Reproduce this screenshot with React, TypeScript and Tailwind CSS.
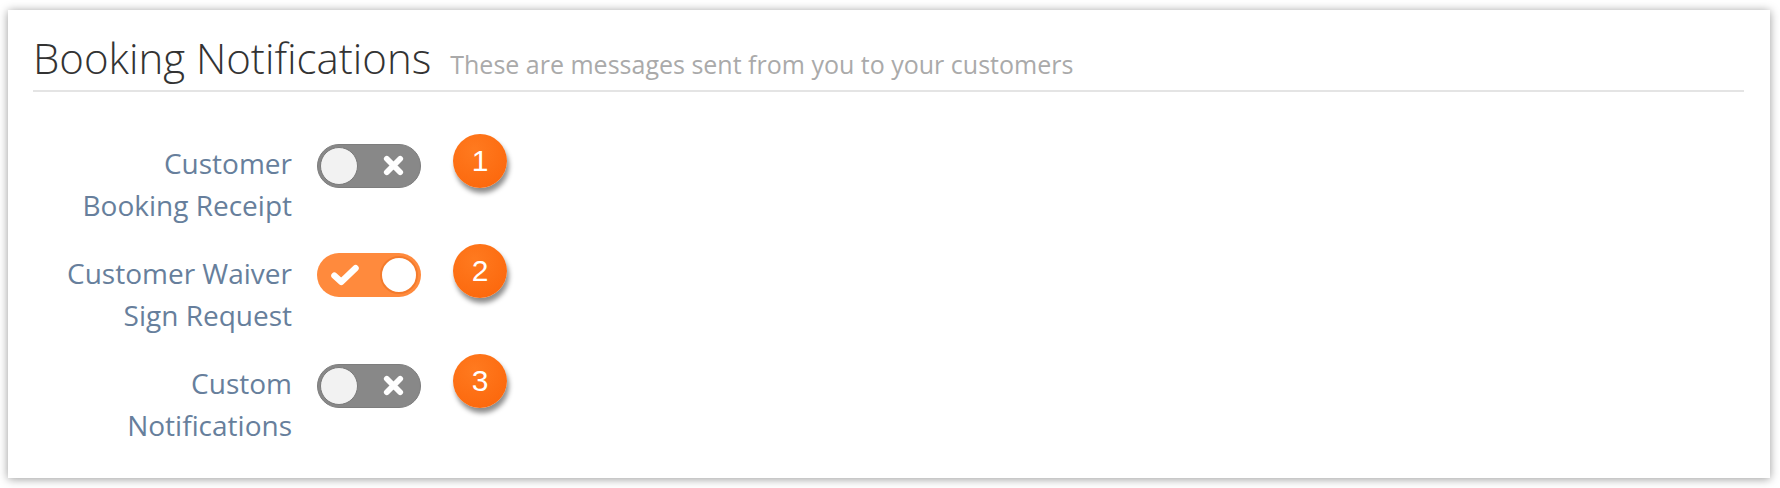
import React from 'react';

type Row = { label: string[]; on: boolean; n: number };

const rows: Row[] = [
  { label: ['Customer', 'Booking Receipt'], on: false, n: 1 },
  { label: ['Customer Waiver', 'Sign Request'], on: true, n: 2 },
  { label: ['Custom', 'Notifications'], on: false, n: 3 },
];

const Toggle: React.FC<{ on: boolean }> = ({ on }) => {
  if (on) {
    return (
      <div className="relative mt-[1px] flex h-[44px] w-[104px] shrink-0 items-center rounded-full bg-[#ff8a3d]">
        <svg viewBox="0 0 24 24" className="ml-[13px] h-[30px] w-[30px]">
          <path d="M3.5 12.5 L9 17.5 L20.5 6.5" fill="none" stroke="white" strokeWidth="5" strokeLinecap="round" strokeLinejoin="round" />
        </svg>
        <span className="absolute right-[3px] top-[3px] h-[38px] w-[38px] rounded-full border-2 border-[#f47b2c] bg-white" />
      </div>
    );
  }
  return (
    <div className="relative mt-[2px] flex h-[44px] w-[104px] shrink-0 items-center rounded-full border border-[#7d7d7d] bg-[#888888]">
      <span className="absolute left-[2px] top-[2px] h-[38px] w-[38px] rounded-full border border-[#7a7a7a] bg-[#f2f2f2]" />
      <svg viewBox="0 0 24 24" className="ml-[64px] h-[23px] w-[23px]">
        <path d="M5 5 L19 19 M19 5 L5 19" fill="none" stroke="white" strokeWidth="6" strokeLinecap="round" />
      </svg>
    </div>
  );
};

const Badge: React.FC<{ n: number }> = ({ n }) => (
  <div className="-mt-[8px] ml-[32px] flex h-[54px] w-[54px] shrink-0 items-center justify-center rounded-full bg-[radial-gradient(circle_at_40%_30%,#ff7a1f,#fb6409)] shadow-[2px_5px_5px_rgba(0,0,0,0.45)]">
    <span className="font-['Liberation_Sans',Arial,sans-serif] text-[30px] leading-none text-white">{n}</span>
  </div>
);

export default function App() {
  return (
    <div className="min-h-screen bg-white pb-[10px] pl-[8px] pr-[10px] pt-[10px]">
      <div className="h-[468px] bg-white pl-[25px] pr-[26px] pt-[25px] shadow-[0_1px_9px_rgba(0,0,0,0.4)]">
        <div className="flex items-baseline border-b-2 border-[#e4e4e4] pb-[6px] font-['Open_Sans',sans-serif]">
          <h1 className="text-[42px] font-light leading-[46px] text-[#333333]">Booking Notifications</h1>
          <span className="ml-[19px] text-[25px] font-normal text-[#aaaaaa]">These are messages sent from you to your customers</span>
        </div>

        <div className="mt-[50px] flex flex-col gap-[26px]">
          {rows.map((r) => (
            <div key={r.n} className="flex items-start">
              <div className="w-[259px] shrink-0 text-right font-['Open_Sans',sans-serif] text-[28px] leading-[42px] text-[#677f9c]">
                {r.label.map((l) => (
                  <div key={l}>{l}</div>
                ))}
              </div>
              <div className="ml-[25px]">
                <Toggle on={r.on} />
              </div>
              <Badge n={r.n} />
            </div>
          ))}
        </div>
      </div>
    </div>
  );
}
